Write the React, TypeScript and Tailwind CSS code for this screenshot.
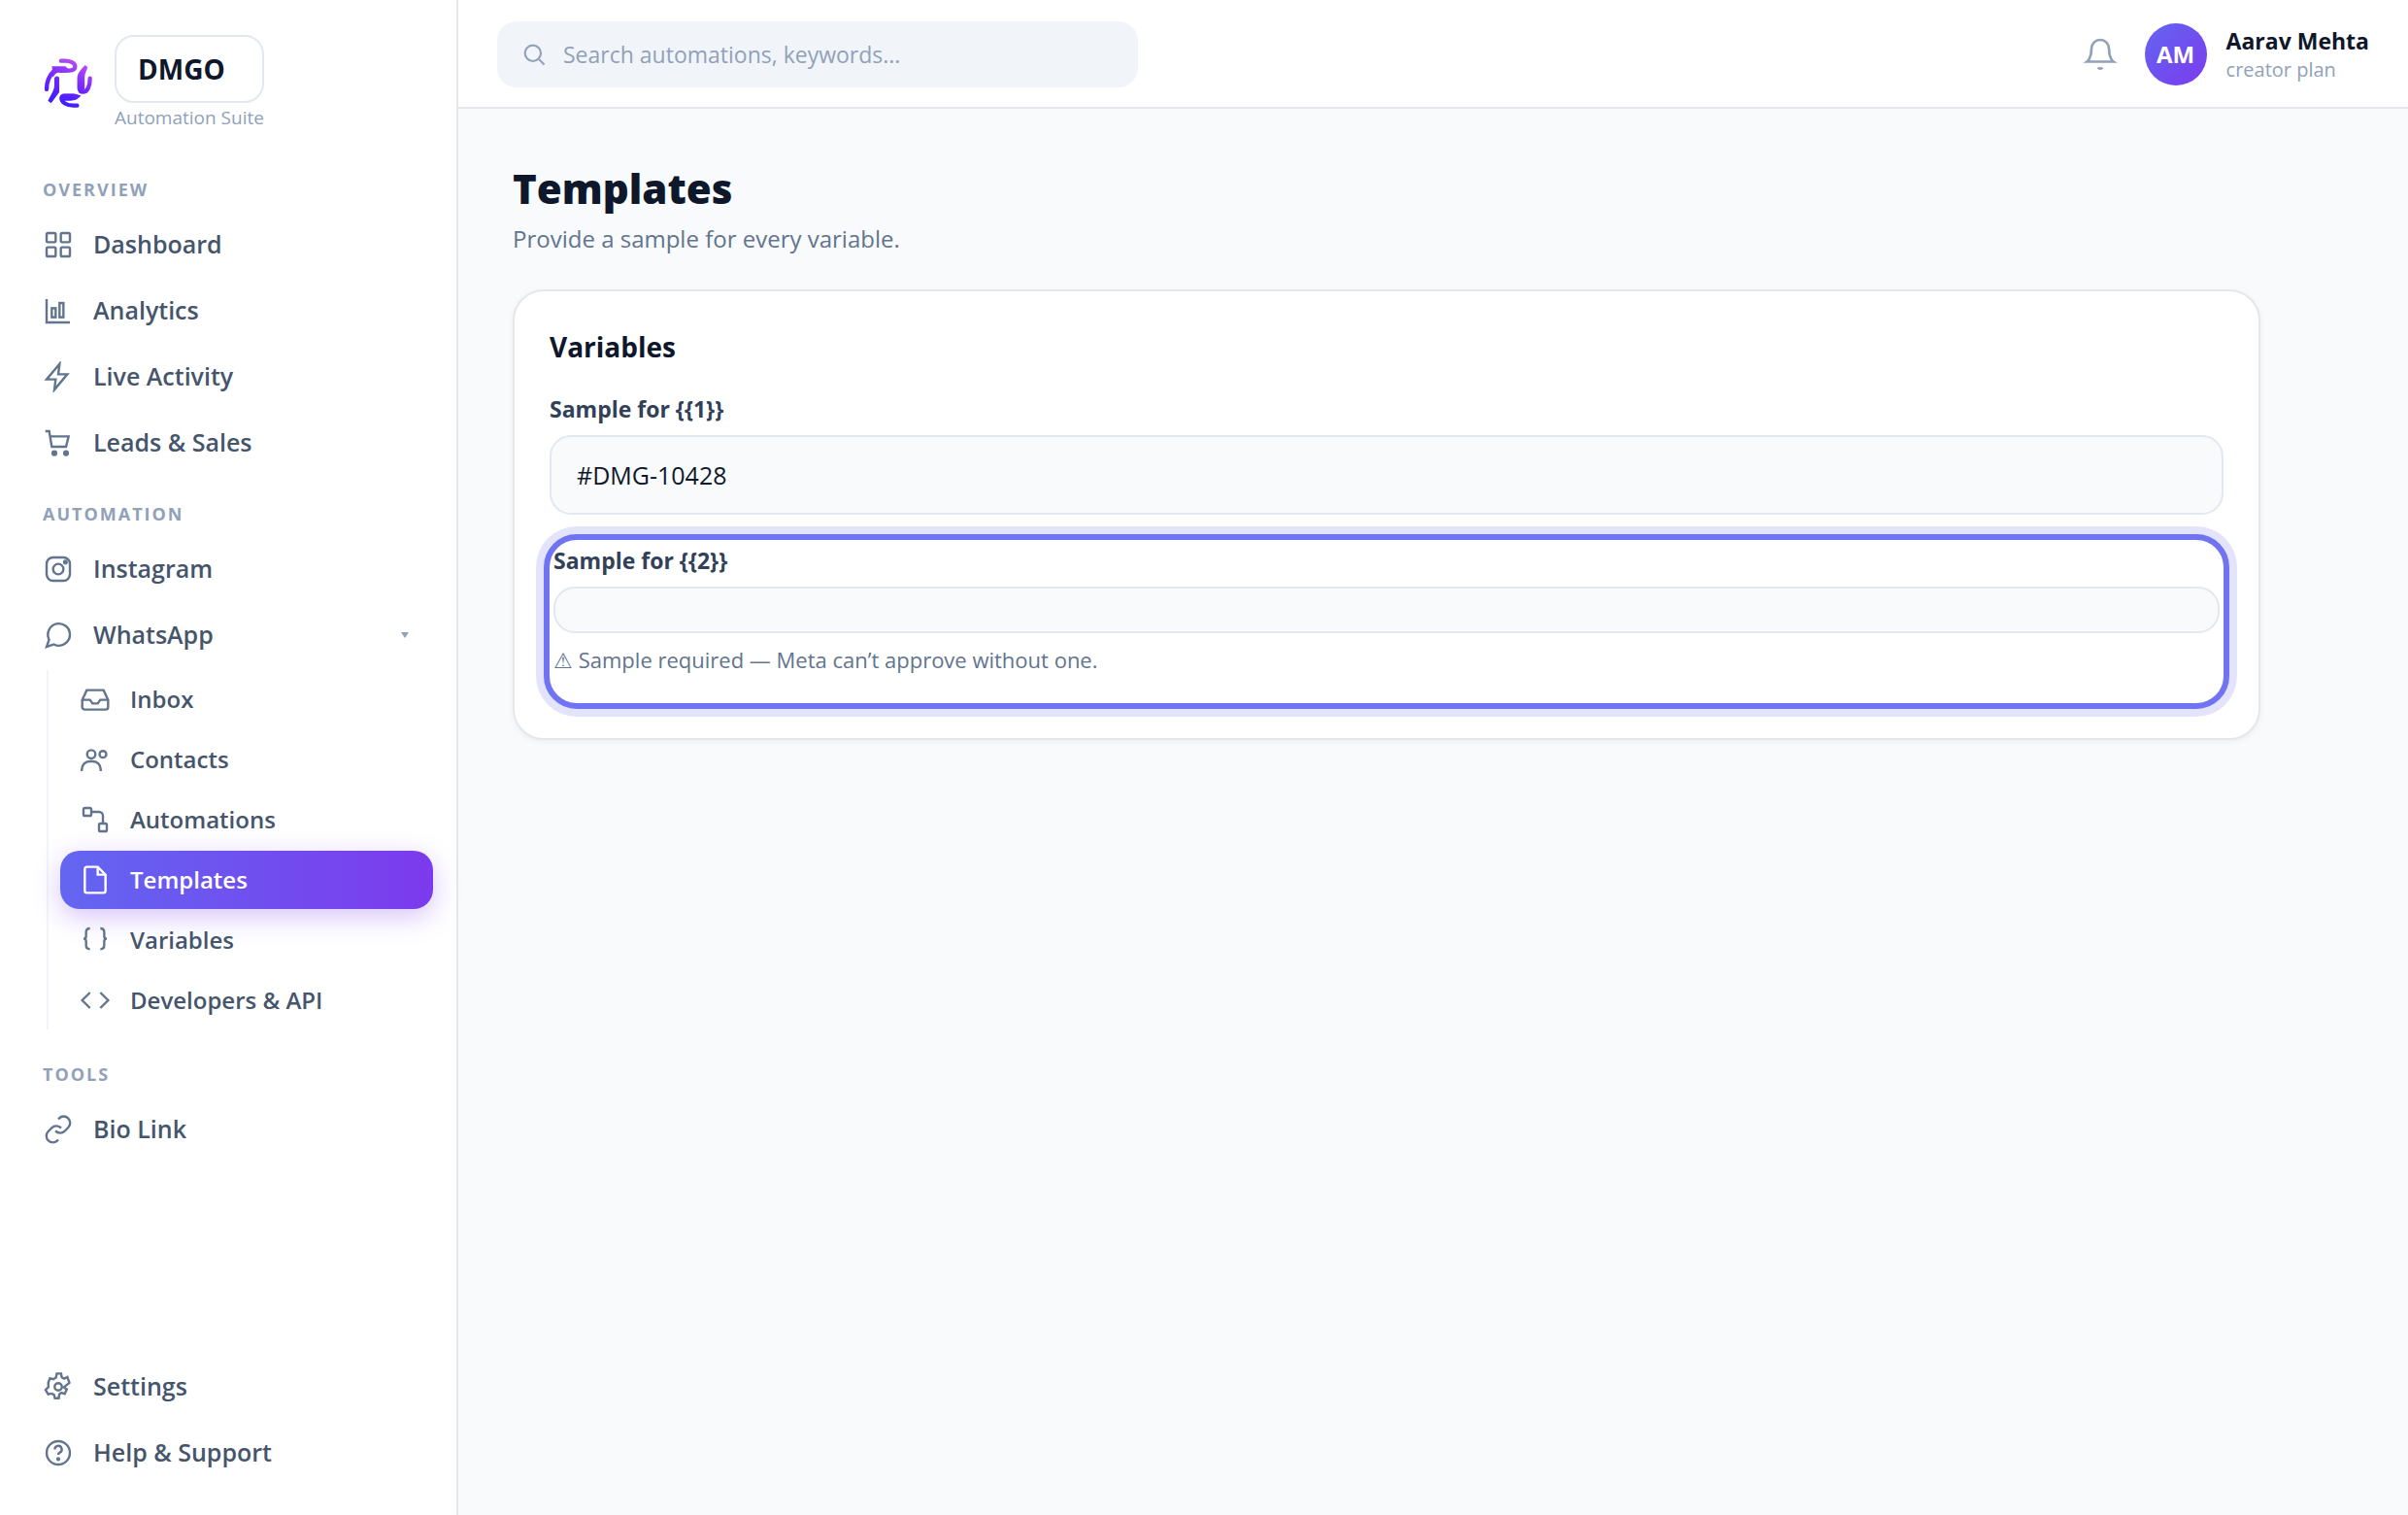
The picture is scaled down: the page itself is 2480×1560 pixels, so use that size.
import React, { useState } from 'react';

type IconProps = { className?: string; children: React.ReactNode };

const Icon = ({ className = 'size-8', children }: IconProps) => (
  <svg
    viewBox="0 0 24 24"
    fill="none"
    stroke="currentColor"
    strokeWidth={1.8}
    className={'shrink-0 ' + className}
    aria-hidden="true"
  >
    {children}
  </svg>
);

const icons: Record<string, React.ReactNode> = {
  dashboard: (
    <>
      <rect x="3" y="3" width="7" height="7" rx="1" />
      <rect x="14" y="3" width="7" height="7" rx="1" />
      <rect x="3" y="14" width="7" height="7" rx="1" />
      <rect x="14" y="14" width="7" height="7" rx="1" />
    </>
  ),
  analytics: (
    <>
      <path d="M3 3v18h18" />
      <rect x="7" y="10" width="3" height="7" />
      <rect x="13" y="6" width="3" height="11" />
    </>
  ),
  activity: <path d="M13 2 3 14h7l-1 8 10-12h-7z" />,
  leads: (
    <>
      <path d="M2 3h3l2 12h11l2-8H5.7" />
      <circle cx="9" cy="20" r="1.4" fill="currentColor" />
      <circle cx="18" cy="20" r="1.4" fill="currentColor" />
    </>
  ),
  instagram: (
    <>
      <rect x="3" y="3" width="18" height="18" rx="5" />
      <circle cx="12" cy="12" r="4" />
      <circle cx="17.5" cy="6.5" r="1" fill="currentColor" />
    </>
  ),
  whatsapp: <path d="M21 11.5a8.5 8.5 0 0 1-12.4 7.6L3 21l1.9-5.6A8.5 8.5 0 1 1 21 11.5z" />,
  inbox: (
    <>
      <path d="M22 12.5h-6l-2 2.8h-4l-2-2.8H2" />
      <path d="M5.5 5h13L22 12.5V18a2 2 0 0 1-2 2H4a2 2 0 0 1-2-2v-5.5z" />
    </>
  ),
  contacts: (
    <>
      <circle cx="9" cy="8" r="3.2" />
      <circle cx="18" cy="8" r="2.6" />
      <path d="M1.7 21v-1.5a6 6 0 0 1 6-6h2.6a6 6 0 0 1 6 6V21" />
    </>
  ),
  automations: (
    <>
      <rect x="3" y="3" width="6" height="6" rx="1" />
      <rect x="15" y="15" width="6" height="6" rx="1" />
      <path d="M9 6h6a3 3 0 0 1 3 3v6" />
    </>
  ),
  templates: (
    <>
      <path d="M14 2H5.5A1.5 1.5 0 0 0 4 3.5v17A1.5 1.5 0 0 0 5.5 22h13a1.5 1.5 0 0 0 1.5-1.5V8z" />
      <path d="M14 2v6h6" />
    </>
  ),
  variables: (
    <>
      <path d="M8 3c-2 0-3 1-3 3v3c0 1.2-.5 2-2 2 1.5 0 2 .8 2 2v3c0 2 1 3 3 3" />
      <path d="M16 3c2 0 3 1 3 3v3c0 1.2.5 2 2 2-1.5 0-2 .8-2 2v3c0 2-1 3-3 3" />
    </>
  ),
  developers: <path d="m8 6-6 6 6 6M16 6l6 6-6 6" />,
  link: (
    <>
      <path d="M9.8 13a5 5 0 0 0 7.2.3l2.7-2.800a5 5 0 0 0-7.1-7.1L12 4" />
      <path d="M14.200 11a5 5 0 0 0-7.200-.3l-2.700 2.800a5 5 0 0 0 7.100 7.100l.6-.6" />
    </>
  ),
  settings: (
    <>
      <circle cx="12" cy="12" r="2.8" />
      <path d="M10.9 1.8h3.3l.5 2.9 1.8 1L19 4.4l1.6 4.5-4.3 3.400 2.300 1.700-1.600 3.400-2.600-.8-1.600 1.200-.4 3H9.400l-.6-2.600-1.800-1-2.800.6-2-3.400 2.200-2.200-.1-3.600 1.300-3.200 2.600.8 2-1.300z" />
    </>
  ),
  help: (
    <>
      <circle cx="12" cy="12" r="9" />
      <path d="M9.300 9.300a2.700 2.700 0 1 1 3.900 2.400c-.8.4-1.200.9-1.200 1.800" />
      <circle cx="12" cy="16.800" r=".7" fill="currentColor" />
    </>
  ),
};

const Logo = () => (
  <svg viewBox="12 12 168 168" className="size-14 shrink-0" fill="none" aria-hidden="true">
    <defs>
      <linearGradient id="brand" gradientUnits="userSpaceOnUse" x1="118" y1="30" x2="60" y2="165">
        <stop offset="0" stopColor="#b44cf6" />
        <stop offset="0.5" stopColor="#6f25ff" />
        <stop offset="1" stopColor="#3a1cff" />
      </linearGradient>
    </defs>
    <g stroke="url(#brand)" strokeWidth="13" strokeLinecap="round">
      <path d="M69 26h12c16 0 31 6 31 17 0 9-8 13-18 13H68" />
      <path d="M46 58c-14 14-22 32-22 56" />
      <path d="M158 80c0 24-8 42-22 42-6 0-10-4-10-12V80" />
      <path d="M118 164h-12c-20 0-36-10-36-22 0-6 4-8 10-8h28" />
    </g>
    <g fill="url(#brand)">
      <path d="M40 43h42l12 10-6 9H62c-8 0-14 6-18 14l-8-8 6-14z" />
      <path d="M48 80c2-8 14-9 15-1v44l-25 34-10-8 14-26c4-8 6-14 6-24z" />
      <path d="m143 39 8 7-8 20c-3 12 0 34-2 48l-15 8-7-8V78c0-12 8-22 24-39z" />
      <path d="M74 128h38c6 0 12 4 18 5-8 12-20 16-32 16H76z" />
    </g>
  </svg>
);

const overview = [
  { icon: 'dashboard', label: 'Dashboard' },
  { icon: 'analytics', label: 'Analytics' },
  { icon: 'activity', label: 'Live Activity' },
  { icon: 'leads', label: 'Leads & Sales' },
];

const whatsapp = [
  { icon: 'inbox', label: 'Inbox' },
  { icon: 'contacts', label: 'Contacts' },
  { icon: 'automations', label: 'Automations' },
  { icon: 'templates', label: 'Templates' },
  { icon: 'variables', label: 'Variables' },
  { icon: 'developers', label: 'Developers & API' },
];

const SectionLabel = ({ children }: { children: React.ReactNode }) => (
  <h2 className="mt-6 mb-2.5 px-5 text-[18px] leading-7 font-bold tracking-[2px] text-slate-400 uppercase">
    {children}
  </h2>
);

const NavItem = ({ icon, label }: { icon: string; label: string }) => (
  <a
    href="#"
    className="mb-0.5 flex h-[66px] items-center gap-5 rounded-[20px] px-5 text-[25px] font-semibold text-slate-600 hover:bg-slate-50"
  >
    <Icon className="size-8 text-slate-500">{icons[icon]}</Icon>
    <span>{label}</span>
  </a>
);

const SubItem = ({ icon, label, active }: { icon: string; label: string; active: boolean }) => (
  <a
    href="#"
    aria-current={active ? 'page' : undefined}
    className={
      active
        ? 'flex h-[60px] items-center gap-5 rounded-[20px] bg-linear-to-r/srgb from-[#6366f1] to-[#7c3aed] px-5 text-[24px] font-semibold text-white shadow-[0_8px_28px_rgba(124,58,237,0.3)]'
        : 'flex h-[60px] items-center gap-5 rounded-[20px] px-5 text-[24px] font-semibold text-slate-600 hover:bg-slate-50'
    }
  >
    <Icon className={active ? 'size-8 text-white' : 'size-8 text-slate-500'}>{icons[icon]}</Icon>
    <span>{label}</span>
  </a>
);

const Sidebar = () => {
  const [open, setOpen] = useState(true);

  return (
    <aside className="flex w-[472px] shrink-0 flex-col border-r-2 border-gray-200 bg-white px-6 pt-9 pb-[29px]">
      <div className="mb-[21px] flex items-center gap-[18px] px-5">
        <Logo />
        <div>
          <div className="rounded-[20px] border-2 border-slate-200 px-[22px] text-[28px] leading-[66px] font-bold text-slate-900">
            DMGO
          </div>
          <div className="text-[19px] leading-[30px] text-slate-400">Automation Suite</div>
        </div>
      </div>

      <nav className="flex flex-1 flex-col">
        <SectionLabel>Overview</SectionLabel>
        {overview.map((item) => (
          <NavItem key={item.label} {...item} />
        ))}

        <SectionLabel>Automation</SectionLabel>
        <NavItem icon="instagram" label="Instagram" />
        <button
          type="button"
          aria-expanded={open}
          onClick={() => setOpen(!open)}
          className="mb-[3px] flex h-[66px] w-full items-center gap-5 rounded-[20px] px-5 text-left text-[25px] font-semibold text-slate-600 hover:bg-slate-50"
        >
          <Icon className="size-8 text-slate-500">{icons.whatsapp}</Icon>
          <span className="flex-1">WhatsApp</span>
          <svg viewBox="0 0 16 16" className="size-4 fill-slate-400" aria-hidden="true">
            <path d="M3 5h8l-4 6z" />
          </svg>
        </button>
        {open && (
          <div className="mb-2 ml-6 flex flex-col gap-0.5 border-l-2 border-slate-100 pl-3">
            {whatsapp.map((item) => (
              <SubItem key={item.label} {...item} active={item.label === 'Templates'} />
            ))}
          </div>
        )}

        <SectionLabel>Tools</SectionLabel>
        <NavItem icon="link" label="Bio Link" />
      </nav>

      <nav aria-label="Account">
        <NavItem icon="settings" label="Settings" />
        <NavItem icon="help" label="Help & Support" />
      </nav>
    </aside>
  );
};

const Header = () => (
  <header className="flex h-28 items-center justify-between border-b-2 border-gray-200 bg-white px-10 pt-0.5">
    <label className="flex h-[68px] w-[660px] items-center gap-4 rounded-[20px] bg-slate-100 px-6 text-slate-400">
      <Icon className="size-7">
        <circle cx="11" cy="11" r="7" />
        <path d="m21 21-4.500-4.500" />
      </Icon>
      <input
        type="search"
        aria-label="Search"
        placeholder="Search automations, keywords..."
        className="min-w-0 flex-1 bg-transparent text-[23px] text-slate-900 outline-none placeholder:text-slate-400"
      />
    </label>

    <div className="flex items-center">
      <button type="button" aria-label="Notifications" className="mr-7 text-slate-400">
        <Icon className="size-9">
          <path d="M18 8a6 6 0 0 0-12 0c0 7-3 9-3 9h18s-3-2-3-9" />
          <path d="M13.500 21a1.800 1.800 0 0 1-3 0" />
        </Icon>
      </button>
      <div className="mr-5 flex size-16 items-center justify-center rounded-full bg-linear-to-br/srgb from-[#6366f1] to-[#7c3aed] text-[24px] font-bold text-white">
        AM
      </div>
      <div>
        <div className="text-[23px] leading-8 font-bold text-slate-900">Aarav Mehta</div>
        <div className="text-[20px] leading-7 text-slate-400">creator plan</div>
      </div>
    </div>
  </header>
);

export default function App() {
  const [first, setFirst] = useState('#DMG-10428');
  const [second, setSecond] = useState('');

  return (
    <div className="flex min-h-screen bg-slate-50 font-['Open_Sans',sans-serif]">
      <Sidebar />
      <div className="min-w-0 flex-1">
        <Header />
        <main className="max-w-[1912px] px-14 pt-[50px] pb-14">
          <h1 className="text-[42px] leading-[64px] font-extrabold text-slate-900">Templates</h1>
          <p className="text-[24px] leading-10 text-slate-500">Provide a sample for every variable.</p>

          <section className="mt-8 rounded-[32px] border-2 border-gray-200 bg-white p-9 shadow-[0_2px_6px_rgba(15,23,42,0.05)]">
            <h2 className="mb-[26px] text-[28px] leading-[42px] font-bold text-slate-900">Variables</h2>

            <label htmlFor="sample-1" className="mb-2.5 block text-[23px] leading-[34px] font-bold text-slate-700">
              {'Sample for {{1}}'}
            </label>
            <input
              id="sample-1"
              value={first}
              onChange={(e) => setFirst(e.target.value)}
              className="block h-[82px] w-full rounded-[22px] border-2 border-slate-200 bg-slate-50 px-[26px] text-[25px] text-slate-900 outline-none"
            />

            <div className="mt-[26px] rounded-[28px] px-1 pt-1 pb-[30px] shadow-[0_0_0_14px_rgba(99,102,241,0.18)] outline-6 outline-[#7074f3]">
              <label htmlFor="sample-2" className="mb-2.5 block text-[23px] leading-[34px] font-bold text-slate-700">
                {'Sample for {{2}}'}
              </label>
              <input
                id="sample-2"
                value={second}
                onChange={(e) => setSecond(e.target.value)}
                aria-describedby="sample-2-hint"
                className="block h-12 w-full rounded-[22px] border-2 border-slate-200 bg-slate-50 px-[26px] text-[25px] text-slate-900 outline-none"
              />
              <p id="sample-2-hint" className="mt-3 text-[22px] leading-[30px] text-slate-500">
                ⚠ Sample required — Meta can’t approve without one.
              </p>
            </div>
          </section>
        </main>
      </div>
    </div>
  );
}
